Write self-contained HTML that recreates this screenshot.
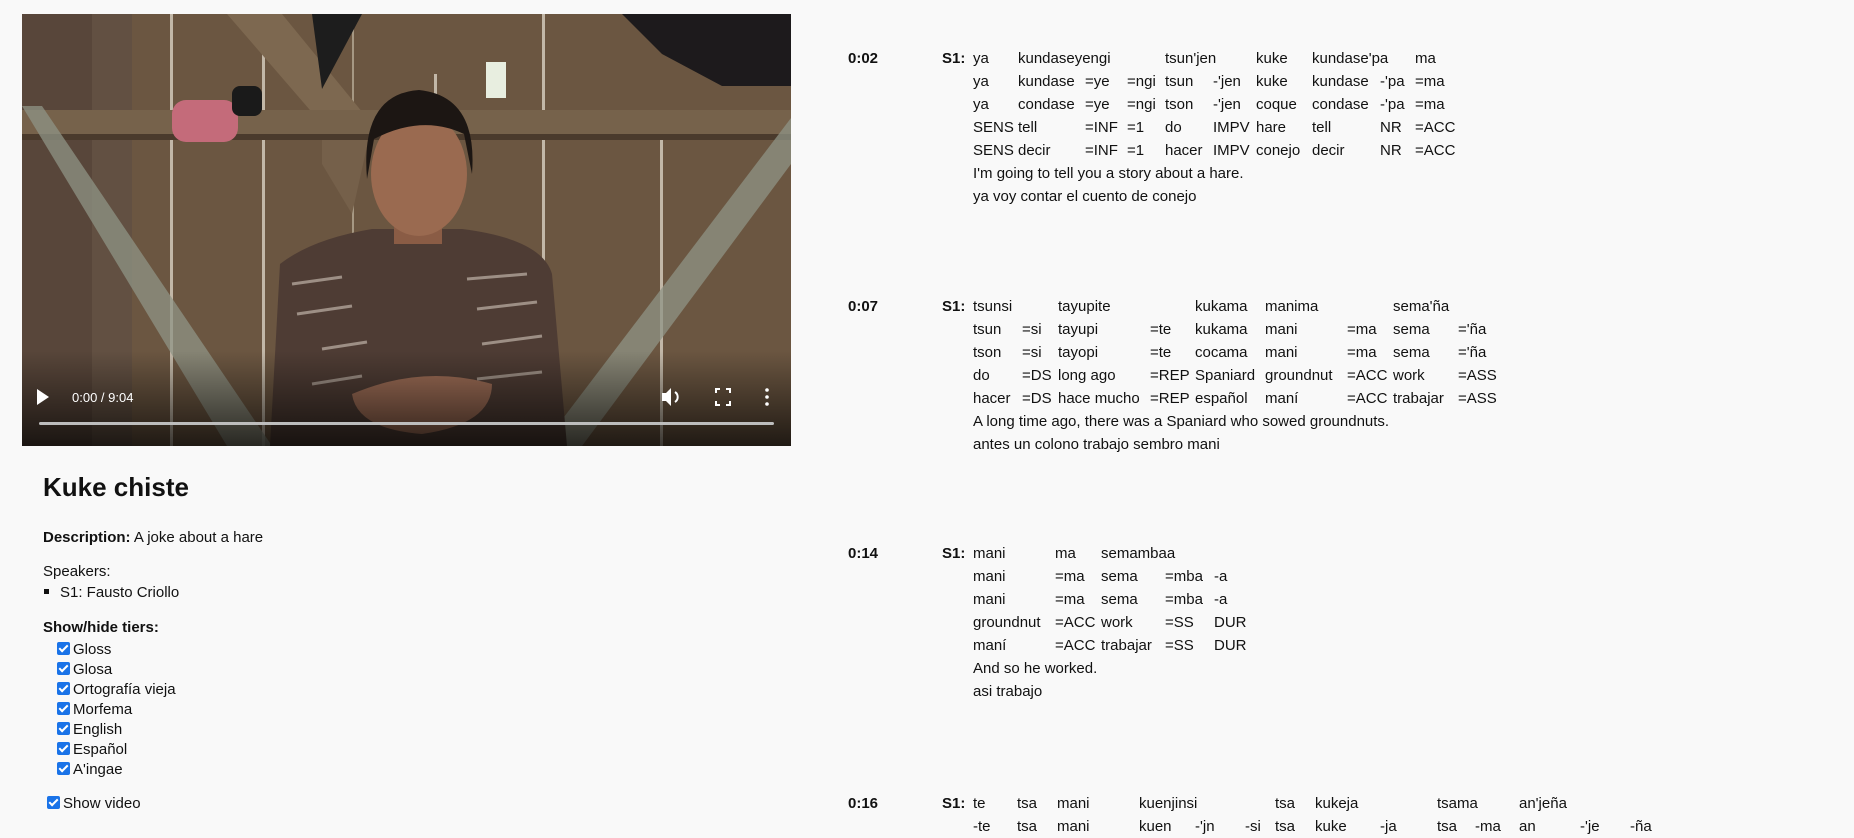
<!DOCTYPE html>
<html><head><meta charset="utf-8"><style>
html,body{margin:0;padding:0;width:1854px;height:824px;overflow:hidden;background:#f9f9f9;font-family:"Liberation Sans",sans-serif;color:#111;font-size:15px}
.a{position:absolute;white-space:nowrap;line-height:23px}
.b{font-weight:bold}
.cb{position:absolute;width:13px;height:13px;background:#1a73e8;border-radius:2px}
.cb:after{content:"";position:absolute;left:4px;top:1px;width:3px;height:7px;border:solid #fff;border-width:0 2px 2px 0;transform:rotate(45deg)}
</style></head><body>
<svg style="position:absolute;left:22px;top:14px" width="769" height="432" viewBox="0 0 769 432">
<defs><linearGradient id="bot" x1="0" y1="0" x2="0" y2="1"><stop offset="0.78" stop-color="#000" stop-opacity="0"/><stop offset="1" stop-color="#000" stop-opacity="0.7"/></linearGradient></defs>
<rect width="769" height="432" fill="#6b5641"/>
<rect x="0" y="0" width="70" height="432" fill="#58463a"/>
<rect x="70" y="0" width="40" height="432" fill="#625042"/>
<rect x="148" y="0" width="3" height="432" fill="#d8d0c0" opacity=".8"/>
<rect x="240" y="40" width="3" height="392" fill="#d8d0c0" opacity=".8"/>
<rect x="330" y="0" width="2" height="432" fill="#bfb5a0" opacity=".7"/>
<rect x="412" y="60" width="3" height="372" fill="#d8d0c0" opacity=".8"/>
<rect x="520" y="0" width="3" height="432" fill="#d8d0c0" opacity=".8"/>
<rect x="638" y="110" width="3" height="322" fill="#d8d0c0" opacity=".8"/>
<polygon points="205,0 260,0 350,110 300,110" fill="#7d6850"/>
<polygon points="300,110 350,110 330,200 300,150" fill="#75604a"/>
<rect x="0" y="96" width="769" height="26" fill="#76624b"/>
<rect x="0" y="120" width="769" height="6" fill="#4a3a2c"/>
<rect x="464" y="48" width="20" height="36" fill="#e8eee0"/>
<rect x="150" y="86" width="66" height="42" rx="14" fill="#c46b7a"/>
<rect x="210" y="72" width="30" height="30" rx="8" fill="#1a1a1a"/>
<path d="M600 0 L769 0 L769 72 L700 72 L640 40 Z" fill="#1d1a1c"/>
<path d="M290 0 L340 0 L300 75 Z" fill="#1d1d1d"/>
<polygon points="0,92 20,92 250,432 205,432" fill="#8f9486" opacity=".75"/>
<polygon points="769,104 769,150 560,432 520,432" fill="#8f9486" opacity=".75"/>
<path d="M248,432 L258,250 Q290,225 350,215 L440,215 Q520,225 530,260 L545,432 Z" fill="#4e3c34"/>
<g stroke="#bfb3a8" stroke-width="3" opacity=".7"><line x1="270" y1="270" x2="320" y2="263"/><line x1="275" y1="300" x2="330" y2="292"/><line x1="445" y1="265" x2="505" y2="260"/><line x1="455" y1="295" x2="515" y2="288"/><line x1="300" y1="335" x2="345" y2="328"/><line x1="460" y1="330" x2="520" y2="322"/><line x1="290" y1="370" x2="340" y2="362"/><line x1="455" y1="365" x2="520" y2="358"/></g>
<rect x="372" y="200" width="48" height="30" fill="#8a5c45"/>
<ellipse cx="397" cy="160" rx="48" ry="62" fill="#9a6a50"/>
<path d="M345 165 Q338 80 397 76 Q456 82 450 160 L442 120 Q400 100 352 125 Z" fill="#1c1613"/>
<path d="M330 380 Q400 350 470 370 Q470 410 400 420 Q335 415 330 380 Z" fill="#9c6c55"/>
<rect width="769" height="432" fill="url(#bot)"/>
<polygon points="15,375 15,391 27,383" fill="#fff"/>
<text x="50" y="388" fill="#fff" font-size="13" font-family="Liberation Sans">0:00 / 9:04</text>
<path d="M640 379 h4 l5 -5 v18 l-5 -5 h-4 z" fill="#fff"/>
<path d="M653 378 a6 6 0 0 1 0 10" stroke="#fff" stroke-width="2" fill="none"/>
<path d="M694 379 v-4 h4 M704 375 h4 v4 M708 387 v4 h-4 M698 391 h-4 v-4" stroke="#fff" stroke-width="2" fill="none"/>
<circle cx="745" cy="376" r="1.8" fill="#fff"/><circle cx="745" cy="383" r="1.8" fill="#fff"/><circle cx="745" cy="390" r="1.8" fill="#fff"/>
<rect x="17" y="408" width="735" height="3" rx="1.5" fill="#bdbdbd"/>
</svg>

<div class="a b" style="left:43px;top:472px;font-size:26px;line-height:30px">Kuke chiste</div>
<div class="a" style="left:43px;top:526px"><b>Description:</b> A joke about a hare</div>
<div class="a" style="left:43px;top:560px">Speakers:</div>
<div style="position:absolute;left:44px;top:589px;width:5px;height:5px;background:#111"></div>
<div class="a" style="left:60px;top:581px">S1: Fausto Criollo</div>
<div class="a b" style="left:43px;top:616px">Show/hide tiers:</div>
<div class="cb" style="left:57px;top:642px"></div><div class="a" style="left:73px;top:638px">Gloss</div>
<div class="cb" style="left:57px;top:662px"></div><div class="a" style="left:73px;top:658px">Glosa</div>
<div class="cb" style="left:57px;top:682px"></div><div class="a" style="left:73px;top:678px">Ortografía vieja</div>
<div class="cb" style="left:57px;top:702px"></div><div class="a" style="left:73px;top:698px">Morfema</div>
<div class="cb" style="left:57px;top:722px"></div><div class="a" style="left:73px;top:718px">English</div>
<div class="cb" style="left:57px;top:742px"></div><div class="a" style="left:73px;top:738px">Español</div>
<div class="cb" style="left:57px;top:762px"></div><div class="a" style="left:73px;top:758px">A'ingae</div>
<div class="cb" style="left:47px;top:796px"></div><div class="a" style="left:63px;top:792px">Show video</div>

<!-- block 1 -->
<div class="a b" style="left:848px;top:47px">0:02</div><div class="a b" style="left:942px;top:47px">S1:</div>
<div class="a" style="left:973px;top:47px">ya</div><div class="a" style="left:1018px;top:47px">kundaseyengi</div><div class="a" style="left:1165px;top:47px">tsun'jen</div><div class="a" style="left:1256px;top:47px">kuke</div><div class="a" style="left:1312px;top:47px">kundase'pa</div><div class="a" style="left:1415px;top:47px">ma</div>
<div class="a" style="left:973px;top:70px">ya</div><div class="a" style="left:1018px;top:70px">kundase</div><div class="a" style="left:1085px;top:70px">=ye</div><div class="a" style="left:1127px;top:70px">=ngi</div><div class="a" style="left:1165px;top:70px">tsun</div><div class="a" style="left:1213px;top:70px">-'jen</div><div class="a" style="left:1256px;top:70px">kuke</div><div class="a" style="left:1312px;top:70px">kundase</div><div class="a" style="left:1380px;top:70px">-'pa</div><div class="a" style="left:1415px;top:70px">=ma</div>
<div class="a" style="left:973px;top:93px">ya</div><div class="a" style="left:1018px;top:93px">condase</div><div class="a" style="left:1085px;top:93px">=ye</div><div class="a" style="left:1127px;top:93px">=ngi</div><div class="a" style="left:1165px;top:93px">tson</div><div class="a" style="left:1213px;top:93px">-'jen</div><div class="a" style="left:1256px;top:93px">coque</div><div class="a" style="left:1312px;top:93px">condase</div><div class="a" style="left:1380px;top:93px">-'pa</div><div class="a" style="left:1415px;top:93px">=ma</div>
<div class="a" style="left:973px;top:116px">SENS</div><div class="a" style="left:1018px;top:116px">tell</div><div class="a" style="left:1085px;top:116px">=INF</div><div class="a" style="left:1127px;top:116px">=1</div><div class="a" style="left:1165px;top:116px">do</div><div class="a" style="left:1213px;top:116px">IMPV</div><div class="a" style="left:1256px;top:116px">hare</div><div class="a" style="left:1312px;top:116px">tell</div><div class="a" style="left:1380px;top:116px">NR</div><div class="a" style="left:1415px;top:116px">=ACC</div>
<div class="a" style="left:973px;top:139px">SENS</div><div class="a" style="left:1018px;top:139px">decir</div><div class="a" style="left:1085px;top:139px">=INF</div><div class="a" style="left:1127px;top:139px">=1</div><div class="a" style="left:1165px;top:139px">hacer</div><div class="a" style="left:1213px;top:139px">IMPV</div><div class="a" style="left:1256px;top:139px">conejo</div><div class="a" style="left:1312px;top:139px">decir</div><div class="a" style="left:1380px;top:139px">NR</div><div class="a" style="left:1415px;top:139px">=ACC</div>
<div class="a" style="left:973px;top:162px">I'm going to tell you a story about a hare.</div>
<div class="a" style="left:973px;top:185px">ya voy contar el cuento de conejo</div>

<!-- block 2 -->
<div class="a b" style="left:848px;top:295px">0:07</div><div class="a b" style="left:942px;top:295px">S1:</div>
<div class="a" style="left:973px;top:295px">tsunsi</div><div class="a" style="left:1058px;top:295px">tayupite</div><div class="a" style="left:1195px;top:295px">kukama</div><div class="a" style="left:1265px;top:295px">manima</div><div class="a" style="left:1393px;top:295px">sema'ña</div>
<div class="a" style="left:973px;top:318px">tsun</div><div class="a" style="left:1022px;top:318px">=si</div><div class="a" style="left:1058px;top:318px">tayupi</div><div class="a" style="left:1150px;top:318px">=te</div><div class="a" style="left:1195px;top:318px">kukama</div><div class="a" style="left:1265px;top:318px">mani</div><div class="a" style="left:1347px;top:318px">=ma</div><div class="a" style="left:1393px;top:318px">sema</div><div class="a" style="left:1458px;top:318px">='ña</div>
<div class="a" style="left:973px;top:341px">tson</div><div class="a" style="left:1022px;top:341px">=si</div><div class="a" style="left:1058px;top:341px">tayopi</div><div class="a" style="left:1150px;top:341px">=te</div><div class="a" style="left:1195px;top:341px">cocama</div><div class="a" style="left:1265px;top:341px">mani</div><div class="a" style="left:1347px;top:341px">=ma</div><div class="a" style="left:1393px;top:341px">sema</div><div class="a" style="left:1458px;top:341px">='ña</div>
<div class="a" style="left:973px;top:364px">do</div><div class="a" style="left:1022px;top:364px">=DS</div><div class="a" style="left:1058px;top:364px">long ago</div><div class="a" style="left:1150px;top:364px">=REP</div><div class="a" style="left:1195px;top:364px">Spaniard</div><div class="a" style="left:1265px;top:364px">groundnut</div><div class="a" style="left:1347px;top:364px">=ACC</div><div class="a" style="left:1393px;top:364px">work</div><div class="a" style="left:1458px;top:364px">=ASS</div>
<div class="a" style="left:973px;top:387px">hacer</div><div class="a" style="left:1022px;top:387px">=DS</div><div class="a" style="left:1058px;top:387px">hace mucho</div><div class="a" style="left:1150px;top:387px">=REP</div><div class="a" style="left:1195px;top:387px">español</div><div class="a" style="left:1265px;top:387px">maní</div><div class="a" style="left:1347px;top:387px">=ACC</div><div class="a" style="left:1393px;top:387px">trabajar</div><div class="a" style="left:1458px;top:387px">=ASS</div>
<div class="a" style="left:973px;top:410px">A long time ago, there was a Spaniard who sowed groundnuts.</div>
<div class="a" style="left:973px;top:433px">antes un colono trabajo sembro mani</div>

<!-- block 3 -->
<div class="a b" style="left:848px;top:542px">0:14</div><div class="a b" style="left:942px;top:542px">S1:</div>
<div class="a" style="left:973px;top:542px">mani</div><div class="a" style="left:1055px;top:542px">ma</div><div class="a" style="left:1101px;top:542px">semambaa</div>
<div class="a" style="left:973px;top:565px">mani</div><div class="a" style="left:1055px;top:565px">=ma</div><div class="a" style="left:1101px;top:565px">sema</div><div class="a" style="left:1165px;top:565px">=mba</div><div class="a" style="left:1214px;top:565px">-a</div>
<div class="a" style="left:973px;top:588px">mani</div><div class="a" style="left:1055px;top:588px">=ma</div><div class="a" style="left:1101px;top:588px">sema</div><div class="a" style="left:1165px;top:588px">=mba</div><div class="a" style="left:1214px;top:588px">-a</div>
<div class="a" style="left:973px;top:611px">groundnut</div><div class="a" style="left:1055px;top:611px">=ACC</div><div class="a" style="left:1101px;top:611px">work</div><div class="a" style="left:1165px;top:611px">=SS</div><div class="a" style="left:1214px;top:611px">DUR</div>
<div class="a" style="left:973px;top:634px">maní</div><div class="a" style="left:1055px;top:634px">=ACC</div><div class="a" style="left:1101px;top:634px">trabajar</div><div class="a" style="left:1165px;top:634px">=SS</div><div class="a" style="left:1214px;top:634px">DUR</div>
<div class="a" style="left:973px;top:657px">And so he worked.</div>
<div class="a" style="left:973px;top:680px">asi trabajo</div>

<!-- block 4 -->
<div class="a b" style="left:848px;top:792px">0:16</div><div class="a b" style="left:942px;top:792px">S1:</div>
<div class="a" style="left:973px;top:792px">te</div><div class="a" style="left:1017px;top:792px">tsa</div><div class="a" style="left:1057px;top:792px">mani</div><div class="a" style="left:1139px;top:792px">kuenjinsi</div><div class="a" style="left:1275px;top:792px">tsa</div><div class="a" style="left:1315px;top:792px">kukeja</div><div class="a" style="left:1437px;top:792px">tsama</div><div class="a" style="left:1519px;top:792px">an'jeña</div>
<div class="a" style="left:973px;top:815px">-te</div><div class="a" style="left:1017px;top:815px">tsa</div><div class="a" style="left:1057px;top:815px">mani</div><div class="a" style="left:1139px;top:815px">kuen</div><div class="a" style="left:1195px;top:815px">-'jn</div><div class="a" style="left:1245px;top:815px">-si</div><div class="a" style="left:1275px;top:815px">tsa</div><div class="a" style="left:1315px;top:815px">kuke</div><div class="a" style="left:1380px;top:815px">-ja</div><div class="a" style="left:1437px;top:815px">tsa</div><div class="a" style="left:1475px;top:815px">-ma</div><div class="a" style="left:1519px;top:815px">an</div><div class="a" style="left:1580px;top:815px">-'je</div><div class="a" style="left:1630px;top:815px">-ña</div>
</body></html>
